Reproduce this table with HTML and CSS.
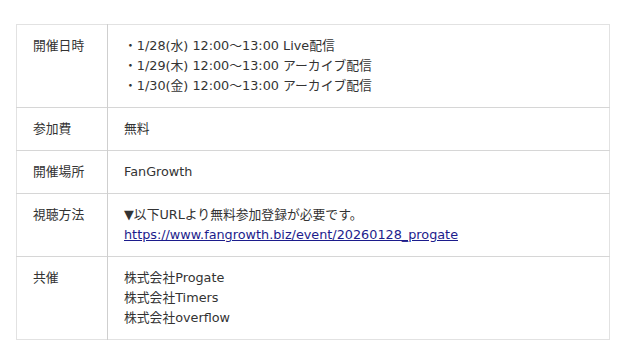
FILE: index.html
```html
<!DOCTYPE html>
<html lang="ja">
<head>
<meta charset="utf-8">
<link rel="stylesheet" href="styles.css">
</head>
<body>
<table class="info">
  <tr>
    <th>開催日時</th>
    <td>・1/28(水) 12:00〜13:00 Live配信<br>・1/29(木) 12:00〜13:00 アーカイブ配信<br>・1/30(金) 12:00〜13:00 アーカイブ配信</td>
  </tr>
  <tr>
    <th>参加費</th>
    <td>無料</td>
  </tr>
  <tr>
    <th>開催場所</th>
    <td>FanGrowth</td>
  </tr>
  <tr>
    <th>視聴方法</th>
    <td>▼以下URLより無料参加登録が必要です。<br><a class="link" href="#">https://www.fangrowth.biz/event/20260128_progate</a></td>
  </tr>
  <tr>
    <th>共催</th>
    <td>株式会社Progate<br>株式会社Timers<br>株式会社overflow</td>
  </tr>
</table>
</body>
</html>
```

FILE: styles.css
```css
html, body {
  margin: 0;
  padding: 0;
  background: #ffffff;
}
body {
  padding: 24px 0 0 16px;
  font-family: "DejaVu Sans", "Noto Sans CJK JP", sans-serif;
  font-size: 12.8px;
  line-height: 20px;
  color: #333333;
}
.info {
  width: 594px;
  border-collapse: collapse;
  border: 1px solid #e2e2e2;
}
.info th,
.info td {
  border-top: 1px solid #d6d6d6;
  padding: 11px 16px;
  text-align: left;
  vertical-align: top;
  font-weight: normal;
}
.info tr:first-child th,
.info tr:first-child td {
  border-top: 1px solid #e2e2e2;
}
.info th {
  width: 58px;
  border-right: 1px solid #cfcfcf;
}
.link {
  color: #1c1c8c;
  text-decoration: underline;
}
```
